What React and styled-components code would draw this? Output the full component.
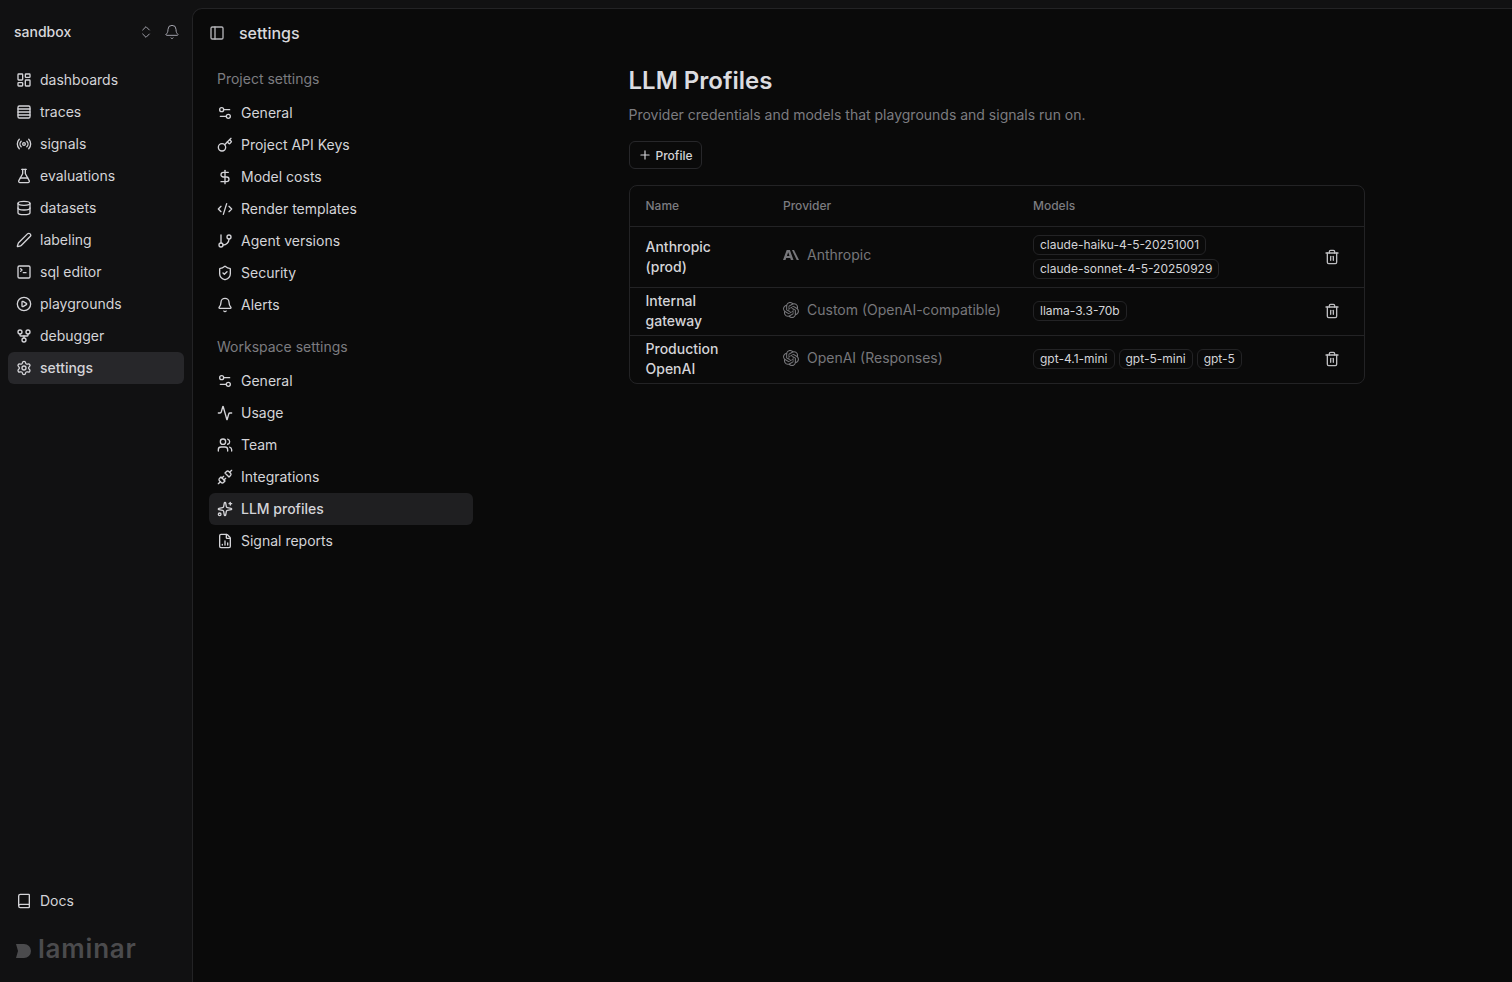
import React from 'react';
import styled, { createGlobalStyle } from 'styled-components';
import {
  Activity, Bell, Book, ChevronsUpDown, CirclePlay, CodeXml, Database, DollarSign,
  FileChartColumn, FlaskConical, GitBranch, GitFork, Key, LayoutDashboard, PanelLeft, Pen, Plus, Radio,
  Rows4, Settings, Settings2, ShieldCheck, Sparkles, SquareTerminal, Trash2, Unplug, Users,
} from 'lucide-react';

const GlobalStyle = createGlobalStyle`
  html, body { margin: 0; height: 100%; background: #111111; }
  #root { height: 100%; }
  * { box-sizing: border-box; }
  body {
    font-family: Inter, "Liberation Sans", sans-serif;
    line-height: 20px;
    overflow: hidden;
    -webkit-font-smoothing: antialiased;
  }
`;

const Shell = styled.div`
  display: flex;
  width: 1512px;
  height: 982px;
  background: #111112;
`;

const Sidebar = styled.aside`
  width: 192px;
  flex-shrink: 0;
  display: flex;
  flex-direction: column;
  padding: 8px 8px 21px;
`;

const WorkspaceRow = styled.div`
  display: flex;
  align-items: center;
  height: 48px;
  padding: 0 4px 0 6px;
  margin-bottom: 8px;
  color: #d8d8dc;
  font-size: 14px;
  font-weight: 500;
`;

const WorkspaceName = styled.span`
  flex: 1;
`;

const WorkspaceIcons = styled.div`
  display: flex;
  align-items: center;
  gap: 10px;
  color: #a1a1aa;
`;

const SideNav = styled.nav`
  display: flex;
  flex-direction: column;
  flex: 1;
`;

const SideItem = styled.div`
  display: flex;
  align-items: center;
  gap: 8px;
  height: 32px;
  padding-left: 8px;
  border-radius: 6px;
  font-size: 14px;
  font-weight: ${p => (p.$active ? 500 : 400)};
  color: #d4d4d8;
  background: ${p => (p.$active ? '#27272a' : 'transparent')};
`;

const Wordmark = styled.div`
  display: flex;
  align-items: center;
  gap: 6px;
  margin: 20px 0 0 8px;
  height: 24px;
  color: #4b4b4d;
  font-size: 26px;
  font-weight: 600;
  letter-spacing: 0.8px;
  line-height: 1;
  svg { margin-top: 3px; }
`;

const Panel = styled.main`
  flex: 1;
  margin-top: 8px;
  background: #0a0a0a;
  border-left: 1px solid #232325;
  border-top: 1px solid #232325;
  border-top-left-radius: 10px;
  display: flex;
  flex-direction: column;
  min-width: 0;
`;

const PanelHeader = styled.header`
  display: flex;
  align-items: center;
  gap: 14px;
  height: 48px;
  padding-left: 16px;
  color: #d8d8dc;
  font-size: 16px;
  font-weight: 500;
  svg { color: #b4b4b8; }
`;

const PanelBody = styled.div`
  display: flex;
  flex: 1;
`;

const SettingsNav = styled.nav`
  width: 289px;
  flex-shrink: 0;
  padding: 6px 9px 0 16px;
  display: flex;
  flex-direction: column;
`;

const SectionTitle = styled.div`
  display: flex;
  align-items: center;
  height: 32px;
  padding-left: 8px;
  margin-top: ${p => (p.$spaced ? '10px' : 0)};
  margin-bottom: 2px;
  font-size: 14px;
  color: #7c7c80;
`;

const SettingsItem = styled.div`
  display: flex;
  align-items: center;
  gap: 8px;
  height: 32px;
  padding-left: 8px;
  border-radius: 6px;
  font-size: 14px;
  font-weight: ${p => (p.$active ? 500 : 400)};
  color: #d4d4d8;
  background: ${p => (p.$active ? '#1f1f21' : 'transparent')};
`;

const Content = styled.section`
  flex: 1;
  display: flex;
  justify-content: center;
  padding: 8px 1px 0 0;
`;

const ContentInner = styled.div`
  width: 736px;
  display: flex;
  flex-direction: column;
  align-items: flex-start;
`;

const Title = styled.h1`
  margin: 0;
  font-size: 24px;
  line-height: 32px;
  font-weight: 600;
  color: #dcdce0;
`;

const Subtitle = styled.p`
  margin: 8px 0 0;
  font-size: 14px;
  line-height: 20px;
  color: #7c7c80;
`;

const AddButton = styled.button`
  display: flex;
  align-items: center;
  gap: 4px;
  height: 28px;
  margin-top: 16px;
  padding: 0 8px;
  font-family: inherit;
  font-size: 12px;
  font-weight: 500;
  color: #d4d4d8;
  background: transparent;
  border: 1px solid #27272a;
  border-radius: 6px;
`;

const Table = styled.div`
  width: 100%;
  margin-top: 16px;
  border: 1px solid #232325;
  border-radius: 8px;
`;

const Row = styled.div`
  display: grid;
  grid-template-columns: 153.5px 250px 1fr 64px;
  align-items: center;
  min-height: ${p => p.$height}px;
  padding-bottom: ${p => (p.$height === 48 ? '1px' : 0)};
  border-top: ${p => (p.$first ? 'none' : '1px solid #232325')};
`;

const HeadCell = styled.div`
  font-size: 12px;
  font-weight: 500;
  color: #7c7c80;
  padding-left: ${p => (p.$first ? '16px' : 0)};
`;

const NameCell = styled.div`
  width: 100px;
  margin-left: 16px;
  font-size: 14px;
  line-height: 20px;
  font-weight: 500;
  color: #d4d4d8;
`;

const ProviderCell = styled.div`
  display: flex;
  align-items: center;
  gap: 8px;
  padding-bottom: ${p => (p.$tall ? '4px' : '3px')};
  font-size: 14px;
  color: #77777b;
  svg { flex-shrink: 0; }
`;

const Chips = styled.div`
  display: flex;
  flex-wrap: wrap;
  gap: 4px;
`;

const Chip = styled.span`
  display: inline-block;
  height: 20px;
  padding: 0 6px;
  font-size: 12px;
  line-height: 18px;
  font-weight: 400;
  color: #d4d4d8;
  border: 1px solid #232325;
  border-radius: 6px;
`;

const DeleteCell = styled.div`
  display: flex;
  justify-content: center;
  color: #bdbdc0;
`;

const AnthropicMark = () => (
  <svg width="16" height="16" viewBox="0 0 16 16" fill="#77777b">
    <path fillRule="evenodd" d="M3.7 3h3.2l3.6 10H7.9l-.7-2H3.2l-.7 2H0L3.7 3Zm.2 6h2.6L5.2 5.3 3.9 9Z" />
    <path d="M9 3h2l5 10h-2.3L9 3Z" />
  </svg>
);

const OpenAIMark = () => (
  <svg width="16" height="16" viewBox="0 0 24 24" fill="#77777b">
    <path d="M22.28 9.82a5.98 5.98 0 0 0-.52-4.91 6.05 6.05 0 0 0-6.51-2.9A6.07 6.07 0 0 0 4.98 4.18a5.98 5.98 0 0 0-4 2.9 6.05 6.05 0 0 0 .75 7.1 5.98 5.98 0 0 0 .51 4.91 6.05 6.05 0 0 0 6.51 2.9A5.98 5.98 0 0 0 13.26 24a6.06 6.06 0 0 0 5.77-4.21 5.99 5.99 0 0 0 4-2.9 6.06 6.06 0 0 0-.75-7.07ZM13.26 22.43a4.48 4.48 0 0 1-2.88-1.04l.14-.08 4.78-2.76a.79.79 0 0 0 .39-.68v-6.74l2.02 1.17a.07.07 0 0 1 .04.05v5.58a4.5 4.5 0 0 1-4.49 4.5ZM3.6 18.3a4.47 4.47 0 0 1-.53-3.01l.14.08 4.78 2.76a.77.77 0 0 0 .78 0l5.84-3.37v2.33a.08.08 0 0 1-.03.06l-4.84 2.79A4.5 4.5 0 0 1 3.6 18.3ZM2.34 7.9a4.49 4.49 0 0 1 2.37-1.97V11.6a.77.77 0 0 0 .39.68l5.81 3.35-2.02 1.17a.08.08 0 0 1-.07 0l-4.83-2.79A4.5 4.5 0 0 1 2.34 7.87Zm16.6 3.86L13.1 8.36l2.02-1.16a.08.08 0 0 1 .07 0l4.83 2.79a4.49 4.49 0 0 1-.68 8.1v-5.68a.79.79 0 0 0-.4-.66Zm2.01-3.02-.14-.09-4.77-2.78a.78.78 0 0 0-.79 0L9.41 9.23V6.9a.07.07 0 0 1 .03-.06l4.83-2.79a4.5 4.5 0 0 1 6.68 4.66ZM8.31 12.86l-2.02-1.16a.08.08 0 0 1-.04-.06V6.07a4.5 4.5 0 0 1 7.38-3.45l-.14.08-4.78 2.76a.79.79 0 0 0-.4.68Zm1.1-2.37 2.6-1.5 2.61 1.5v3l-2.6 1.5-2.61-1.5Z" />
  </svg>
);

const LaminarMark = () => (
  <svg width="16" height="16" viewBox="0 0 16 16" fill="#4b4b4d">
    <path d="M0 1h8a7 7 0 0 1 0 14H0l2-7-2-7Z" />
  </svg>
);

const mainNav = [
  ['dashboards', LayoutDashboard],
  ['traces', Rows4],
  ['signals', Radio],
  ['evaluations', FlaskConical],
  ['datasets', Database],
  ['labeling', Pen],
  ['sql editor', SquareTerminal],
  ['playgrounds', CirclePlay],
  ['debugger', GitFork],
  ['settings', Settings],
];

const projectNav = [
  ['General', Settings2],
  ['Project API Keys', Key],
  ['Model costs', DollarSign],
  ['Render templates', CodeXml],
  ['Agent versions', GitBranch],
  ['Security', ShieldCheck],
  ['Alerts', Bell],
];

const workspaceNav = [
  ['General', Settings2],
  ['Usage', Activity],
  ['Team', Users],
  ['Integrations', Unplug],
  ['LLM profiles', Sparkles],
  ['Signal reports', FileChartColumn],
];

const profiles = [
  { name: 'Anthropic (prod)', provider: 'Anthropic', Mark: AnthropicMark, models: ['claude-haiku-4-5-20251001', 'claude-sonnet-4-5-20250929'], height: 61 },
  { name: 'Internal gateway', provider: 'Custom (OpenAI-compatible)', Mark: OpenAIMark, models: ['llama-3.3-70b'], height: 48 },
  { name: 'Production OpenAI', provider: 'OpenAI (Responses)', Mark: OpenAIMark, models: ['gpt-4.1-mini', 'gpt-5-mini', 'gpt-5'], height: 48 },
];

export default function App() {
  return (
    <>
      <GlobalStyle />
      <Shell>
        <Sidebar>
          <WorkspaceRow>
            <WorkspaceName>sandbox</WorkspaceName>
            <WorkspaceIcons>
              <ChevronsUpDown size={16} strokeWidth={1.5} />
              <Bell size={16} strokeWidth={1.5} />
            </WorkspaceIcons>
          </WorkspaceRow>
          <SideNav>
            {mainNav.map(([label, Icon]) => (
              <SideItem key={label} $active={label === 'settings'}>
                <Icon size={16} />
                {label}
              </SideItem>
            ))}
          </SideNav>
          <SideItem>
            <Book size={16} />
            Docs
          </SideItem>
          <Wordmark>
            <LaminarMark />
            laminar
          </Wordmark>
        </Sidebar>
        <Panel>
          <PanelHeader>
            <PanelLeft size={16} />
            settings
          </PanelHeader>
          <PanelBody>
            <SettingsNav>
              <SectionTitle>Project settings</SectionTitle>
              {projectNav.map(([label, Icon]) => (
                <SettingsItem key={label}>
                  <Icon size={16} />
                  {label}
                </SettingsItem>
              ))}
              <SectionTitle $spaced>Workspace settings</SectionTitle>
              {workspaceNav.map(([label, Icon]) => (
                <SettingsItem key={label} $active={label === 'LLM profiles'}>
                  <Icon size={16} />
                  {label}
                </SettingsItem>
              ))}
            </SettingsNav>
            <Content>
              <ContentInner>
                <Title>LLM Profiles</Title>
                <Subtitle>Provider credentials and models that playgrounds and signals run on.</Subtitle>
                <AddButton>
                  <Plus size={14} />
                  Profile
                </AddButton>
                <Table>
                  <Row $first $height={40}>
                    <HeadCell $first>Name</HeadCell>
                    <HeadCell>Provider</HeadCell>
                    <HeadCell>Models</HeadCell>
                    <HeadCell />
                  </Row>
                  {profiles.map(({ name, provider, Mark, models, height }) => (
                    <Row key={name} $height={height}>
                      <NameCell>{name}</NameCell>
                      <ProviderCell $tall={models.length === 2}>
                        <Mark />
                        {provider}
                      </ProviderCell>
                      <Chips>
                        {models.map(m => <Chip key={m}>{m}</Chip>)}
                      </Chips>
                      <DeleteCell>
                        <Trash2 size={16} />
                      </DeleteCell>
                    </Row>
                  ))}
                </Table>
              </ContentInner>
            </Content>
          </PanelBody>
        </Panel>
      </Shell>
    </>
  );
}
